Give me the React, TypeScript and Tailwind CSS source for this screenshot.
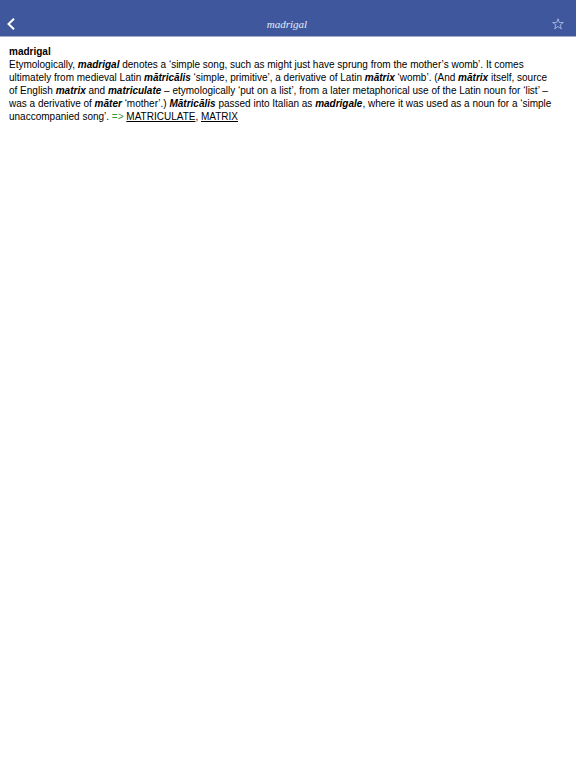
import React from "react";

const Term = ({ children }: { children: React.ReactNode }) => (
  <b className="font-bold italic">{children}</b>
);

const App = () => {
  return (
    <div className="min-h-screen bg-white font-['Liberation_Sans',Arial,sans-serif] text-black">
      <header className="flex h-[37px] items-end justify-between border-b border-[#a0abce] bg-[#3f589d] pr-1.5 pl-1 text-white">
        <button
          type="button"
          aria-label="Back"
          className="flex h-6 w-6 items-center pl-[3px]"
        >
          <svg
            viewBox="0 0 8 12"
            className="h-3 w-2"
            fill="none"
            stroke="currentColor"
            strokeWidth="2"
          >
            <path d="M7 .7 1.5 6 7 11.3" />
          </svg>
        </button>
        <h1 className="font-['Liberation_Serif','Times_New_Roman',serif] text-[11px] leading-6 text-[#e6ebf8] italic">
          madrigal
        </h1>
        <button
          type="button"
          aria-label="Add to favourites"
          className="flex h-6 w-6 items-center justify-center"
        >
          <svg
            viewBox="0 0 14 14"
            className="h-3 w-3"
            fill="none"
            stroke="#b0bfe8"
          >
            <path d="M7 .9 8.5 5.3H13.2L9.5 8.1 10.9 12.7 7 9.9 3.1 12.7 4.5 8.1.8 5.3H5.5Z" />
          </svg>
        </button>
      </header>

      <main className="pt-2 pr-5 pl-[9px] text-[10px] leading-[13px]">
        <h2 className="font-bold">madrigal</h2>
        <p>
          Etymologically, <Term>madrigal</Term> denotes a ‘simple song, such as
          might just have sprung from the mother’s womb’. It comes ultimately
          from medieval Latin <Term>mātricālis</Term> ‘simple, primitive’, a
          derivative of Latin <Term>mātrix</Term> ‘womb’. (And{" "}
          <Term>mātrix</Term> itself, source of English <Term>matrix</Term> and{" "}
          <Term>matriculate</Term> – etymologically ‘put on a list’, from a
          later metaphorical use of the Latin noun for ‘list’ – was a derivative
          of <Term>māter</Term> ‘mother’.) <Term>Mātricālis</Term> passed into
          Italian as <Term>madrigale</Term>, where it was used as a noun for a
          ‘simple unaccompanied song’.{" "}
          <span className="text-[#2e9b3e]">=&gt;</span>{" "}
          <a href="#matriculate" className="underline">
            MATRICULATE
          </a>
          ,{" "}
          <a href="#matrix" className="underline">
            MATRIX
          </a>
        </p>
      </main>
    </div>
  );
};

export default App;
